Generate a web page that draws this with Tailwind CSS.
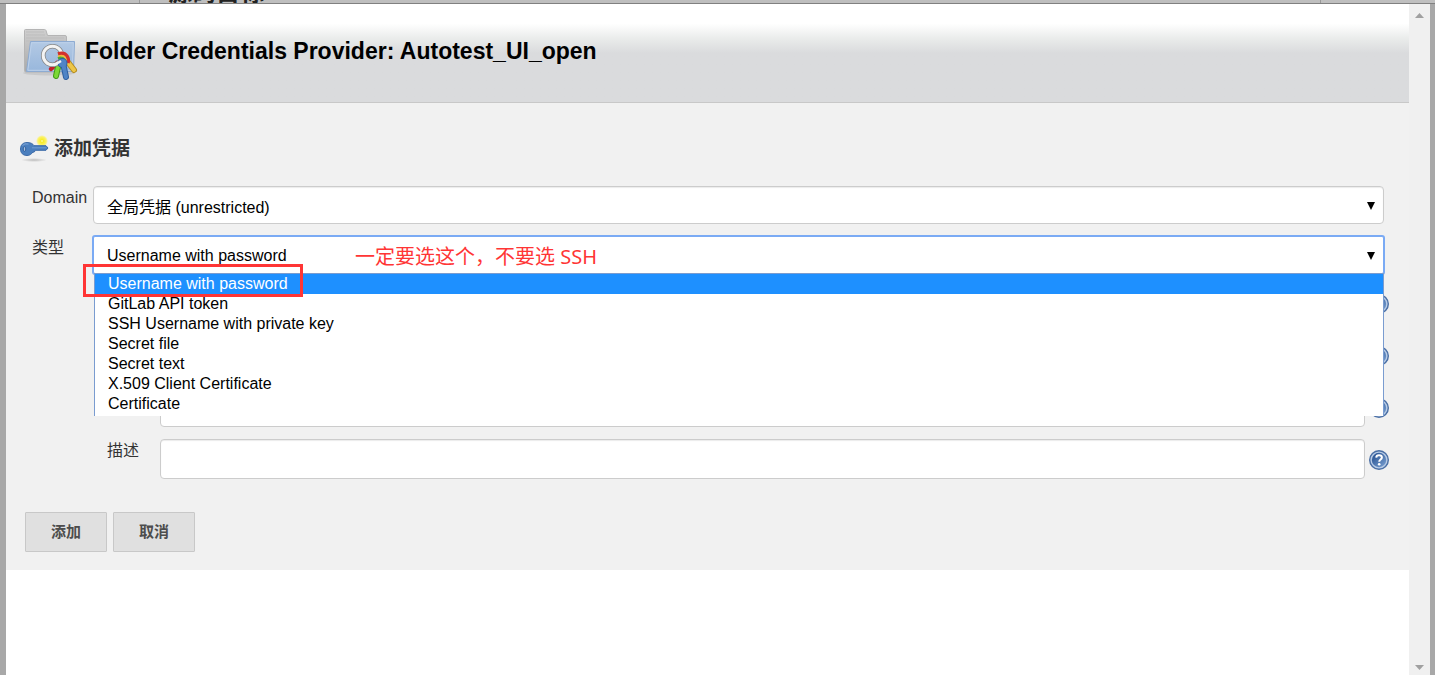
<!DOCTYPE html>
<html lang="zh-CN">
<head>
  <meta charset="UTF-8" />
  <meta name="viewport" content="width=device-width, initial-scale=1.0">
  <title>Folder Credentials Provider</title>

  <!-- Tailwind -->
  <script src="https://cdn.jsdelivr.net/npm/@tailwindcss/browser@4"></script>
</head>
<body class="bg-[#a8a8a8] h-screen overflow-hidden flex flex-col font-['Liberation_Sans','Noto_Sans_CJK_SC',sans-serif] text-base text-[#333]">

  <!-- Page behind the dialog -->
  <div class="h-1 shrink-0 flex bg-[#bfbfbf] border-b border-[#808080] overflow-hidden">
    <div class="w-[140px] border-r border-[#999]"></div>
    <div class="flex-1 flex items-end pl-7 border-r border-[#999]">
      <span class="text-[24px] leading-5 font-bold text-[#222]">源码目标</span>
    </div>
    <div class="w-[114px]"></div>
  </div>

  <!-- Dialog -->
  <div class="flex-1 min-h-0 ml-[6px] mr-[5px] bg-white flex">
    <div class="flex-1 min-w-0">

      <!-- Header -->
      <header class="h-[99px] flex items-start pt-6 pl-4 border-b border-[#c8c8c8] bg-linear-to-b from-white from-20% via-[#e9ebea] via-36% to-[#dadbdd] to-50%">
        <svg class="w-14 h-14 shrink-0" viewBox="0 0 56 56">
          <defs>
            <linearGradient id="folder-back" x1="0" y1="0" x2="0" y2="1">
              <stop offset="0" stop-color="#cfcfcf"/><stop offset="1" stop-color="#a9a9a9"/>
            </linearGradient>
            <linearGradient id="folder-front" x1="0" y1="0" x2="0" y2="1">
              <stop offset="0" stop-color="#b3c9e4"/><stop offset="1" stop-color="#98b7dc"/>
            </linearGradient>
          </defs>
          <ellipse cx="27" cy="45" rx="26" ry="2.500" fill="#000" opacity=".08"/>
          <path d="M2.500 2.500q0-1 1-1h19q1 0 1.500 1l1.500 5h17.500q1.500 0 1.500 1.500v35H4q-1.500 0-1.500-1.500z" fill="url(#folder-back)" stroke="#b4b4b4"/>
          <path d="M4 4h18M4 7h19M4 10h38M4 13h38" stroke="#bdbdbd"/>
          <path d="M8.500 13.500h44l-1 30h-47z" fill="url(#folder-front)" stroke="#8dabd2"/>
          <path d="M9.500 14.700h41.800l-1 27.600H5.800z" fill="none" stroke="#bdd1ea"/>
          <path d="M35 35l-6 6" stroke="#c3222b" stroke-width="4.500" stroke-linecap="round"/>
          <path d="M36 39l-2 9" stroke="#419b16" stroke-width="6" stroke-linecap="round"/>
          <path d="M36 39l-2 9" stroke="#7bd836" stroke-width="4" stroke-linecap="round"/>
          <path d="M45 33l7 9" stroke="#b58d20" stroke-width="6" stroke-linecap="round"/>
          <path d="M45 33l7 9" stroke="#edc648" stroke-width="4" stroke-linecap="round"/>
          <circle cx="30.500" cy="27.500" r="9.300" fill="none" stroke="#858585" stroke-width="4.500"/>
          <circle cx="30.500" cy="27.500" r="9.300" fill="none" stroke="#f3f3f3" stroke-width="3"/>
          <path d="M36 26q6-2 9 2 2 3 1 7" fill="none" stroke="#d3302d" stroke-width="3.500"/>
          <path d="M36 28.500q5-2 7 1 2 3 1 6" fill="none" stroke="#efb83b" stroke-width="2"/>
          <path d="M36 30.500q4-2 6 1 1 2 1 4" fill="none" stroke="#4aa637" stroke-width="2.500"/>
          <path d="M41 35l3 14" stroke="#2f5f9f" stroke-width="6" stroke-linecap="round"/>
          <circle cx="40.500" cy="35" r="5" fill="#2f5f9f"/>
          <path d="M41 35l3 14" stroke="#4f84c6" stroke-width="4" stroke-linecap="round"/>
          <circle cx="40.500" cy="35" r="4" fill="#4f84c6"/>
          <path d="M34 36l5-3" stroke="#f3f3f3" stroke-width="2.500"/>
        </svg>
        <h1 class="pl-[7px] pt-[7px] text-[23px] leading-8 font-bold text-black">Folder Credentials Provider: Autotest_UI_open</h1>
      </header>

      <!-- Form -->
      <form class="bg-[#f1f1f1] pt-8 pb-[18px] pl-[14px] pr-5">
        <h2 class="flex items-center h-7 gap-[5px] text-[19px] leading-7 font-bold">
          <svg class="w-[29px] h-7" viewBox="0 0 29 28">
            <defs>
              <radialGradient id="spark">
                <stop offset="0" stop-color="#fffdb0"/><stop offset=".25" stop-color="#f8ec2c"/><stop offset=".7" stop-color="#fbf26a"/><stop offset="1" stop-color="#fbf26a" stop-opacity="0"/>
              </radialGradient>
              <radialGradient id="key-shadow">
                <stop offset="0" stop-color="#999" stop-opacity=".6"/><stop offset="1" stop-color="#999" stop-opacity="0"/>
              </radialGradient>
            </defs>
            <ellipse cx="14" cy="25" rx="13" ry="2" fill="url(#key-shadow)"/>
            <circle cx="22" cy="6" r="6" fill="url(#spark)"/>
            <path d="M7 7.500c4 0 6 1.500 7 3.200h12l2 2.300-2 2.300H15.500l-1.500 2-1-.5c-1.500 2.500-3.500 3.700-6 3.700-4 0-6.500-2.500-6.500-6.500S3 7.500 7 7.500z" fill="#4b7fbe" stroke="#3c6ba8"/>
            <path d="M12 12.800h14.500" stroke="#6f99d0"/>
            <path d="M2.500 10.500q2-2.500 6-1.500" fill="none" stroke="#7fa6d8"/>
            <ellipse cx="4.500" cy="14" rx="1.300" ry="2.300" fill="#a9c0dd" stroke="#2f5f9c"/>
          </svg>
          添加凭据
        </h2>

        <div class="mt-[23px] pl-3 pr-[5px] grid grid-cols-[61px_1fr] gap-y-3">
          <label for="domain" class="leading-6">Domain</label>
          <div class="relative">
            <select id="domain" class="block appearance-none w-full h-[38px] pl-[13px] pt-[6px] bg-white border border-[#ccc] rounded-sm text-black shadow-[inset_0_1px_1px_rgba(0,0,0,0.08)]">
              <option>全局凭据 (unrestricted)</option>
            </select>
            <svg class="absolute right-[9px] top-4 w-2 h-2 pointer-events-none" viewBox="0 0 8 8"><path d="M0 0h8L4 8z"/></svg>
          </div>

          <label for="kind" class="leading-6">类型</label>
          <div class="relative">
            <select id="kind" class="block appearance-none w-full h-[38px] pl-[13px] pt-0.5 bg-white border border-[#7aaaf4] ring-1 ring-[#7aaaf4] rounded-xs text-black">
              <option>Username with password</option>
            </select>
            <svg class="absolute right-[9px] top-4 w-2 h-2 pointer-events-none" viewBox="0 0 8 8"><path d="M0 0h8L4 8z"/></svg>
            <span class="absolute left-[262px] top-[7px] text-[20px] leading-7 text-[#ff3535] whitespace-nowrap font-['Noto_Sans','Noto_Sans_CJK_SC',sans-serif] pointer-events-none">一定要选这个，不要选 SSH</span>

            <!-- Open list -->
            <ul role="listbox" class="absolute z-10 left-px right-0 top-[37px] pb-0.5 bg-white border-x border-t border-[#7a9cd0] text-black leading-5">
              <li role="option" aria-selected="true" class="pl-[13px] bg-[#1e90ff] text-white">Username with password</li>
              <li role="option" class="pl-[13px]">GitLab API token</li>
              <li role="option" class="pl-[13px]">SSH Username with private key</li>
              <li role="option" class="pl-[13px]">Secret file</li>
              <li role="option" class="pl-[13px]">Secret text</li>
              <li role="option" class="pl-[13px]">X.509 Client Certificate</li>
              <li role="option" class="pl-[13px]">Certificate</li>
            </ul>

            <!-- Highlight frame -->
            <div class="absolute z-20 -left-[10px] top-7 w-[220px] h-[33px] border-3 border-[#ff3535] pointer-events-none"></div>
          </div>
        </div>

        <!-- Fields of the chosen type -->
        <div class="mt-[9px] pl-[87px] grid grid-cols-[53px_1fr_24px] gap-y-3">
          <input aria-label="用户名" type="text" class="col-start-2 h-10 px-3 bg-white border border-[#ccc] rounded-sm">
          <button type="button" aria-label="帮助" class="pl-1 pt-0.5 self-center"><svg class="w-5 h-5"><use href="#help"/></svg></button>

          <input aria-label="密码" type="password" class="col-start-2 h-10 px-3 bg-white border border-[#ccc] rounded-sm">
          <button type="button" aria-label="帮助" class="pl-1 pt-0.5 self-center"><svg class="w-5 h-5"><use href="#help"/></svg></button>

          <input aria-label="ID" type="text" class="col-start-2 h-10 px-3 bg-white border border-[#ccc] rounded-sm">
          <button type="button" aria-label="帮助" class="pl-1 pt-0.5 self-center"><svg class="w-5 h-5"><use href="#help"/></svg></button>

          <label for="desc" class="leading-6">描述</label>
          <input id="desc" type="text" class="h-10 px-3 bg-white border border-[#ccc] rounded-sm shadow-[inset_0_1px_1px_rgba(0,0,0,0.08)]">
          <button type="button" aria-label="帮助" class="pl-1 pt-0.5 self-center"><svg class="w-5 h-5"><use href="#help"/></svg></button>
        </div>

        <div class="mt-[33px] pl-[5px] flex gap-[6px] text-[15px] font-bold text-[#4d4d4d]">
          <button type="submit" class="w-[82px] h-10 bg-[#e0e0e0] border border-[#c8c8c8] rounded-[1px]">添加</button>
          <button type="button" class="w-[82px] h-10 bg-[#e0e0e0] border border-[#c8c8c8] rounded-[1px]">取消</button>
        </div>
      </form>
    </div>

    <!-- Scrollbar -->
    <div class="w-[21px] bg-[#f0f0f0] flex flex-col items-center justify-between pt-[9px] pb-[5px]">
      <svg class="w-[9px] h-[5px]" viewBox="0 0 9 5"><path d="M4.500 0L9 5H0z" fill="#a0a0a0"/></svg>
      <svg class="w-[9px] h-[5px]" viewBox="0 0 9 5"><path d="M4.500 5L9 0H0z" fill="#a0a0a0"/></svg>
    </div>
  </div>

  <!-- Shared help icon -->
  <svg class="absolute w-0 h-0">
    <defs>
      <linearGradient id="help-fill" x1="0" y1="0" x2="1" y2="1">
        <stop offset="0" stop-color="#1f4a8c"/><stop offset="1" stop-color="#7da3d3"/>
      </linearGradient>
    </defs>
    <symbol id="help" viewBox="0 0 20 20">
      <circle cx="10" cy="10" r="9.300" fill="#b9cce6" stroke="#4a6fa5" stroke-width="1.400"/>
      <circle cx="10" cy="10" r="7.200" fill="url(#help-fill)"/>
      <path d="M7.200 7.600C7.300 5.900 8.400 5.200 10 5.200c1.700 0 2.900.9 2.900 2.300 0 1.900-2.700 2-2.700 4.200" fill="none" stroke="#fff" stroke-width="2"/>
      <circle cx="10.200" cy="14.200" r="1.300" fill="#fff"/>
    </symbol>
  </svg>
</body>
</html>
